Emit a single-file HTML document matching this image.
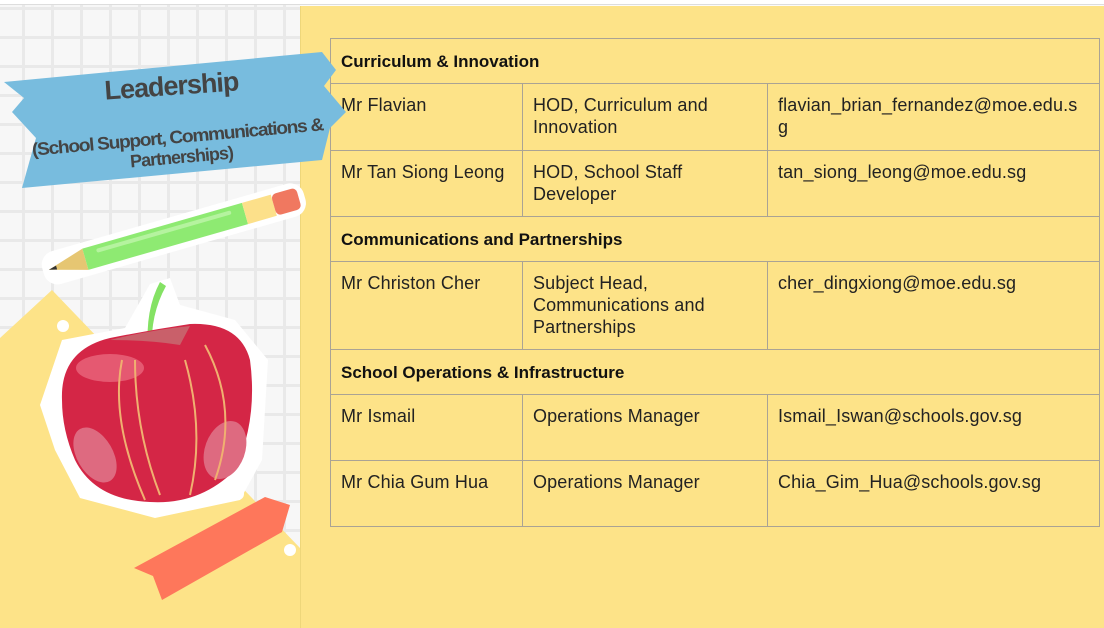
<!DOCTYPE html>
<html><head><style>
body{margin:0;width:1104px;height:628px;overflow:hidden;position:relative;font-family:"Liberation Sans",sans-serif;background:#fbfbfb}
.top{position:absolute;left:0;top:0;width:1104px;height:4px;background:#fff;border-bottom:1px solid #ddd}
.grid{position:absolute;left:0;top:5px;width:300px;height:623px;background-color:#f7f7f7;
background-image:linear-gradient(#e9e9e9 3px,transparent 3px),linear-gradient(90deg,#e9e9e9 3px,transparent 3px);background-size:29px 29px;background-position:-7px 2px}
.yel{position:absolute;left:300px;top:6px;width:804px;height:622px;background:#fde388;border-left:1px solid #eed67a}
table{position:absolute;left:330px;top:38px;width:770px;border-collapse:collapse;font-size:18px;letter-spacing:.15px;color:#222}
td{border:1px solid #aaa394;vertical-align:top;padding:10px 10px 0 10px;line-height:22px}
td.h{font-weight:bold;font-size:17px;letter-spacing:0;height:22px;padding:12px 10px 10px 10px;color:#111}
svg{position:absolute;left:0;top:0;z-index:2}
</style></head><body>
<div class="top"></div>
<div class="grid"></div>
<div class="yel"></div>
<svg width="350" height="628">
<polygon points="0,338 52,290 300,548 300,628 0,628" fill="#fde388"/>
<circle cx="63" cy="326" r="6" fill="#fff"/><circle cx="290" cy="550" r="6" fill="#fff"/><circle cx="238" cy="494" r="6" fill="#fff"/>
<polygon points="4,82 322,52 336,70 324,86 346,112 330,128 322,160 22,188 36,138 12,112 24,98" fill="#78bcde"/>
<text x="172" y="95" transform="rotate(-4 172 95)" text-anchor="middle" font-size="27" font-weight="bold" fill="#444" letter-spacing="-1">Leadership</text>
<text x="178" y="143" transform="rotate(-5 178 143)" text-anchor="middle" font-size="18" font-weight="bold" fill="#444" letter-spacing="-1.2" textLength="292" lengthAdjust="spacingAndGlyphs">(School Support, Communications &amp;</text>
<text x="182" y="163" transform="rotate(-5 182 163)" text-anchor="middle" font-size="18" font-weight="bold" fill="#444" letter-spacing="-1">Partnerships)</text>
<g transform="rotate(-16 170 235)">
<rect x="38" y="218" width="272" height="34" rx="14" fill="#fff"/>
<polygon points="44,235 82,224 82,246" fill="#e6c672"/>
<polygon points="44,235 52,233 52,237" fill="#333"/>
<rect x="82" y="224" width="166" height="22" fill="#8eea72"/>
<rect x="95" y="228" width="140" height="4" rx="2" fill="#b5f39f"/>
<rect x="248" y="224" width="30" height="22" fill="#fce08a"/>
<rect x="278" y="224" width="26" height="22" rx="5" fill="#f07860"/>
</g>
<polygon points="40,405 62,340 125,328 150,284 170,278 180,305 235,320 268,360 262,460 240,500 155,518 80,498 55,450" fill="#fff"/>
<path d="M148,350 Q145,310 160,282 L166,286 Q150,315 152,350Z" fill="#84e264"/>
<path d="M62,400 Q60,350 110,338 Q150,330 190,324 Q240,322 250,360 Q258,420 235,470 Q200,505 150,502 Q95,500 75,460 Q62,430 62,400Z" fill="#d42646"/>
<path d="M110,340 Q150,330 190,326 L180,345 Q150,340 110,340Z" fill="#c9606a"/>
<ellipse cx="110" cy="368" rx="34" ry="14" fill="#e9667c" opacity=".8"/>
<ellipse cx="95" cy="455" rx="18" ry="30" transform="rotate(-30 95 455)" fill="#de6a80"/>
<ellipse cx="225" cy="450" rx="20" ry="30" transform="rotate(20 225 450)" fill="#de6a80"/>
<path d="M122,360 Q110,420 145,500" stroke="#f0b070" stroke-width="2" fill="none"/>
<path d="M135,360 Q135,430 160,495" stroke="#f0b070" stroke-width="2" fill="none"/>
<path d="M185,360 Q205,430 190,495" stroke="#f0b070" stroke-width="2" fill="none"/>
<path d="M205,345 Q240,410 215,480" stroke="#f0b070" stroke-width="2" fill="none"/>
<polygon points="134,568 265,497 290,505 282,532 162,600 153,576" fill="#fe775b"/>
</svg>
<table>
<tr><td class="h" colspan="3">Curriculum &amp; Innovation</td></tr>
<tr style="height:67px"><td style="width:171px">Mr Flavian</td><td style="width:224px">HOD, Curriculum and Innovation</td><td>flavian_brian_fernandez@moe.edu.s<br>g</td></tr>
<tr style="height:66px"><td>Mr Tan Siong Leong</td><td>HOD, School Staff Developer</td><td>tan_siong_leong@moe.edu.sg</td></tr>
<tr><td class="h" colspan="3">Communications and Partnerships</td></tr>
<tr style="height:88px"><td>Mr Christon Cher</td><td>Subject Head, Communications and Partnerships</td><td>cher_dingxiong@moe.edu.sg</td></tr>
<tr><td class="h" colspan="3">School Operations &amp; Infrastructure</td></tr>
<tr style="height:66px"><td>Mr Ismail</td><td>Operations Manager</td><td>Ismail_Iswan@schools.gov.sg</td></tr>
<tr style="height:66px"><td>Mr Chia Gum Hua</td><td>Operations Manager</td><td>Chia_Gim_Hua@schools.gov.sg</td></tr>
</table>
</body></html>
